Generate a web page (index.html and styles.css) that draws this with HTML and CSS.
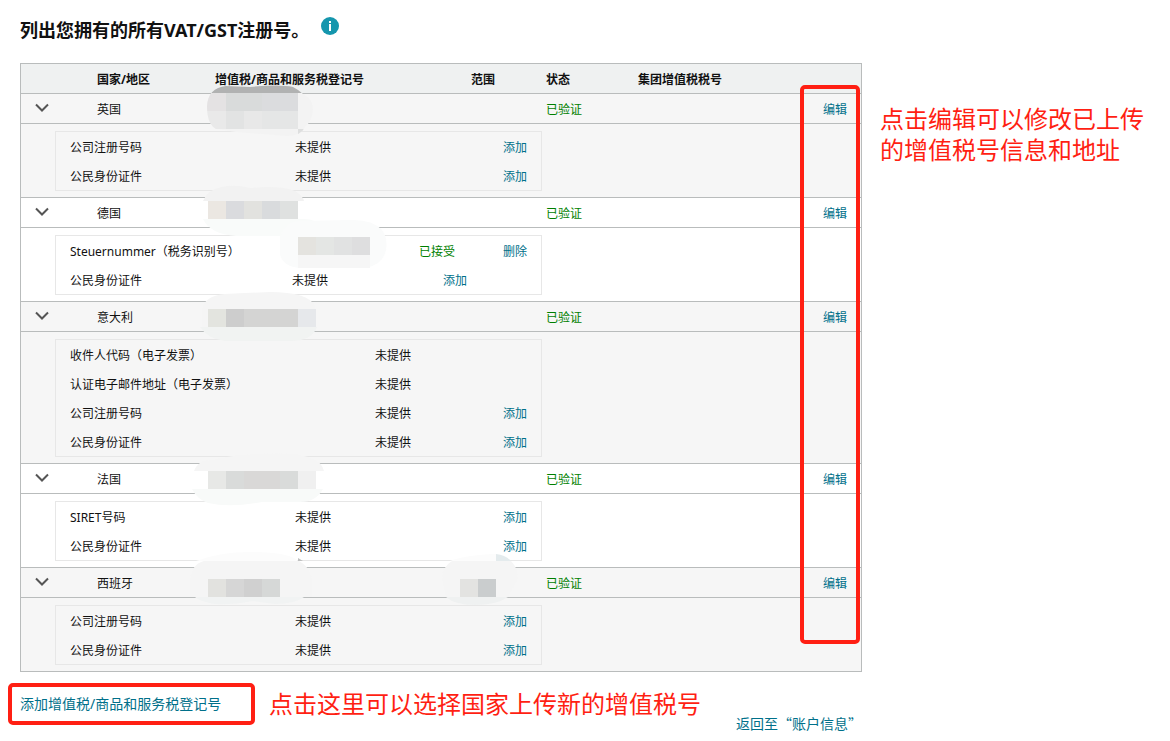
FILE: index.html
```html
<!DOCTYPE html>
<html lang="zh-CN">
<head>
<meta charset="utf-8">
<title>VAT/GST</title>
<link rel="stylesheet" href="styles.css">
</head>
<body>
<header class="head">
  <h1 class="title">列出您拥有的所有VAT/GST注册号。</h1>
  <button class="info" type="button" aria-label="info">
    <svg viewBox="0 0 18 18" width="18" height="18"><circle cx="9" cy="9" r="9" fill="#1596ad"/><path d="M8 4h2v2H8zM8 7h2v7H8z" fill="#fff"/></svg>
  </button>
</header>
<div class="layout">
  <main>
    <div class="table-wrap">
      <table class="vat">
        <colgroup><col class="c-toggle"><col class="c-country"><col class="c-number"><col class="c-scope"><col class="c-status"><col><col class="c-edit"></colgroup>
        <thead>
          <tr><th></th><th>国家/地区</th><th>增值税/商品和服务税登记号</th><th>范围</th><th>状态</th><th>集团增值税税号</th><th></th></tr>
        </thead>
        <tbody class="shade">
          <tr class="main">
            <td><button class="toggle" type="button" aria-label="toggle"><svg viewBox="0 0 14 10" width="14" height="10"><path d="M1 1.500l6 6 6-6"/></svg></button></td>
            <td>英国</td>
            <td class="cover"><svg class="mask" viewBox="185 74 140 70"><clipPath id="m1"><path d="M207 106Q208 88 226 86L250 87Q280 84 293 87Q299 90 303 94Q313 99 313 110Q312 121 305 127Q301 136 287 136L262 134L236 132Q225 130 216 129Q207 124 207 106z"/></clipPath><g clip-path="url(#m1)"><path fill="#f3f3f3" d="M200 80h120v60H200z"/><path fill="#b1b2b2" d="M200 80h110v13H200z"/><path fill="#e4e2e3" d="M200 93h26v18h-26z"/><path fill="#d9dbdb" d="M226 93h36v18h-36z"/><path fill="#dbdcde" d="M262 93h36v18h-36z"/><path fill="#e9e9e9" d="M200 111h26v18h-26z"/><path fill="#e2e3e3" d="M226 111h18v18h-18z"/><path fill="#e8e8e8" d="M244 111h18v18h-18z"/><path fill="#e5e6e6" d="M262 111h36v18h-36z"/><path fill="#dedfdf" d="M298 129h8l-7 5h-1z"/></g></svg></td>
            <td></td><td class="ok">已验证</td><td></td><td class="edit"><a href="#">编辑</a></td>
          </tr>
          <tr class="detail"><td colspan="7">
            <table class="sub">
              <colgroup><col class="s-label"><col><col class="s-act"></colgroup>
              <tr><td>公司注册号码</td><td>未提供</td><td class="act"><a href="#">添加</a></td></tr>
              <tr><td>公民身份证件</td><td>未提供</td><td class="act"><a href="#">添加</a></td></tr>
            </table></td></tr>
        </tbody>
        <tbody>
          <tr class="main">
            <td><button class="toggle" type="button" aria-label="toggle"><svg viewBox="0 0 14 10" width="14" height="10"><path d="M1 1.500l6 6 6-6"/></svg></button></td>
            <td>德国</td>
            <td class="cover"><svg class="mask" viewBox="185 178 140 70"><path fill="#f2f2f2" d="M203 201Q208 189 222 187Q235 184 250 188Q280 185 295 191Q303 196 304 201z"/><path fill="#fff" d="M203 201h101v18H203z"/><path fill="#f9fbfa" d="M203 219h100Q318 219 318 227Q316 236 299 236H236Q210 234 203 219z"/><path fill="#ebe7e2" d="M208 201h18v18h-18z"/><path fill="#dadbde" d="M226 201h18v18h-18z"/><path fill="#e2e2df" d="M244 201h18v18h-18z"/><path fill="#d9dbdd" d="M262 201h18v18h-18z"/><path fill="#dfe1e0" d="M280 201h18v18h-18z"/></svg></td>
            <td></td><td class="ok">已验证</td><td></td><td class="edit"><a href="#">编辑</a></td>
          </tr>
          <tr class="detail"><td colspan="7">
            <table class="sub">
              <colgroup><col class="s-label-de"><col><col class="s-state"><col class="s-act"></colgroup>
              <tr><td>Steuernummer（税务识别号）</td><td class="cover"><svg class="mask" viewBox="248 216 140 70"><path fill="#fafbfb" d="M280 237Q284 222 300 221L350 220Q372 219 382 230Q388 238 386 250Q383 265 365 268H300Q284 267 280 255z"/><path fill="#f6f6f6" d="M298 255h72v13h-72z"/><path fill="#e4e3df" d="M298 237h18v18h-18z"/><path fill="#e4e6e4" d="M316 237h18v18h-18z"/><path fill="#e1e2e2" d="M334 237h18v18h-18z"/><path fill="#dededf" d="M352 237h18v18h-18z"/></svg></td><td class="ok">已接受</td><td class="act"><a href="#">删除</a></td></tr>
              <tr><td>公民身份证件</td><td>未提供</td><td class="act"><a href="#">添加</a></td><td></td></tr>
            </table></td></tr>
        </tbody>
        <tbody class="shade">
          <tr class="main">
            <td><button class="toggle" type="button" aria-label="toggle"><svg viewBox="0 0 14 10" width="14" height="10"><path d="M1 1.500l6 6 6-6"/></svg></button></td>
            <td>意大利</td>
            <td class="cover"><svg class="mask" viewBox="185 282 140 70"><path fill="#f5f5f5" d="M202 309Q205 296 224 294L270 292Q308 292 315 306V328H202z"/><path fill="#f1f3f2" d="M200 327H317Q312 341 290 341H225Q208 339 200 327z"/><path fill="#e3e4df" d="M208 309h18v18h-18z"/><path fill="#cdcdcd" d="M226 309h18v18h-18z"/><path fill="#d4d4d3" d="M244 309h54v18h-54z"/><path fill="#e6e8eb" d="M298 309h18v18h-18z"/></svg></td>
            <td></td><td class="ok">已验证</td><td></td><td class="edit"><a href="#">编辑</a></td>
          </tr>
          <tr class="detail"><td colspan="7">
            <table class="sub">
              <colgroup><col class="s-label-it"><col><col class="s-act"></colgroup>
              <tr><td>收件人代码（电子发票）</td><td>未提供</td><td></td></tr>
              <tr><td>认证电子邮件地址（电子发票）</td><td>未提供</td><td></td></tr>
              <tr><td>公司注册号码</td><td>未提供</td><td class="act"><a href="#">添加</a></td></tr>
              <tr><td>公民身份证件</td><td>未提供</td><td class="act"><a href="#">添加</a></td></tr>
            </table></td></tr>
        </tbody>
        <tbody>
          <tr class="main">
            <td><button class="toggle" type="button" aria-label="toggle"><svg viewBox="0 0 14 10" width="14" height="10"><path d="M1 1.500l6 6 6-6"/></svg></button></td>
            <td>法国</td>
            <td class="cover"><svg class="mask" viewBox="185 444 140 70"><path fill="#f5f5f5" d="M194 471Q198 460 212 460Q240 454 262 454Q300 452 315 460Q322 463 324 471z"/><path fill="#fff" d="M194 471h129v18H194z"/><path fill="#f8faf9" d="M192 489H323Q316 502 300 502L262 502Q230 508 208 503Q197 499 192 489z"/><path fill="#e7e8e6" d="M208 471h18v18h-18z"/><path fill="#d9dbda" d="M226 471h72v18h-72z"/><path fill="#d9d8d7" d="M244 471h36v18h-36z"/><path fill="#f0f0f0" d="M298 471h18v18h-18z"/></svg></td>
            <td></td><td class="ok">已验证</td><td></td><td class="edit"><a href="#">编辑</a></td>
          </tr>
          <tr class="detail"><td colspan="7">
            <table class="sub">
              <colgroup><col class="s-label"><col><col class="s-act"></colgroup>
              <tr><td>SIRET号码</td><td>未提供</td><td class="act"><a href="#">添加</a></td></tr>
              <tr><td>公民身份证件</td><td>未提供</td><td class="act"><a href="#">添加</a></td></tr>
            </table></td></tr>
        </tbody>
        <tbody class="shade">
          <tr class="main">
            <td><button class="toggle" type="button" aria-label="toggle"><svg viewBox="0 0 14 10" width="14" height="10"><path d="M1 1.500l6 6 6-6"/></svg></button></td>
            <td>西班牙</td>
            <td class="cover"><svg class="mask" viewBox="185 548 140 70"><path fill="#fcfcfc" d="M196 561Q220 552 250 552Q290 552 298 561z"/><path fill="#bfc0c0" d="M298 558l5 3h-5z"/><path fill="#f5f5f5" d="M190 579Q192 564 204 561H299Q309 566 312 579V597H190z"/><path fill="#f1f3f3" d="M195 597H304Q295 604 275 604L253 601Q220 607 206 602Q198 600 195 597z"/><path fill="#e2e2df" d="M208 579h18v18h-18z"/><path fill="#d6d6d6" d="M226 579h18v18h-18z"/><path fill="#d0d0d0" d="M244 579h18v18h-18z"/><path fill="#d6d8d7" d="M262 579h18v18h-18z"/></svg></td>
            <td class="cover"><svg class="mask" viewBox="441 548 140 70"><path fill="#fcfcfc" d="M450 561Q465 555 496 554v7z"/><path fill="#e4ebed" d="M496 554q10 1 15 7h-15z"/><path fill="#f5f5f5" d="M442 579Q442 567 452 561H511Q518 568 518 579L508 597H446z"/><path fill="#eff1f1" d="M446 597H508Q496 605 475 605Q455 605 446 597z"/><path fill="#e3e3e1" d="M460 579h18v18h-18z"/><path fill="#cacdce" d="M478 579h18v18h-18z"/></svg></td>
            <td class="ok">已验证</td><td></td><td class="edit"><a href="#">编辑</a></td>
          </tr>
          <tr class="detail"><td colspan="7">
            <table class="sub">
              <colgroup><col class="s-label"><col><col class="s-act"></colgroup>
              <tr><td>公司注册号码</td><td>未提供</td><td class="act"><a href="#">添加</a></td></tr>
              <tr><td>公民身份证件</td><td>未提供</td><td class="act"><a href="#">添加</a></td></tr>
            </table></td></tr>
        </tbody>
      </table>
      <div class="frame"></div>
    </div>
    <div class="foot">
      <div class="boxed"><a href="#">添加增值税/商品和服务税登记号</a></div>
      <p class="note">点击这里可以选择国家上传新的增值税号</p>
      <a class="back" href="#">返回至“账户信息”</a>
    </div>
  </main>
  <aside class="side"><p class="note">点击编辑可以修改已上传的增值税号信息和地址</p></aside>
</div>
</body>
</html>
```

FILE: styles.css
```css
* { box-sizing: border-box; }
body {
  margin: 0;
  background: #fff;
  color: #111;
  font: 12px/18px "Noto Sans", "Noto Sans CJK SC", sans-serif;
}
a { color: #00708a; text-decoration: none; }
button { padding: 0; border: 0; background: none; cursor: pointer; }
svg { display: block; }

.head {
  display: flex;
  align-items: flex-start;
  gap: 12px;
  padding: 17px 20px 0;
  height: 63px;
}
.title { margin: 0; font-size: 18px; line-height: 26px; font-weight: 700; }

.layout {
  display: grid;
  grid-template-columns: minmax(0, 1fr) 280px;
  gap: 18px;
  padding: 0 10px 0 20px;
}
.table-wrap { position: relative; }

table { border-spacing: 0; table-layout: fixed; }
th, td { padding: 0; text-align: left; white-space: nowrap; }
.vat { width: 100%; border: 1px solid #b9bcbc; }
.vat > thead th {
  height: 30px;
  padding-top: 2px;
  background: #eff1f1;
  border-bottom: 1px solid #b9bcbc;
}
.main > td { height: 30px; padding-top: 2px; border-bottom: 1px solid #b9bcbc; }
.detail > td { padding: 7px 0 6px 34px; border-bottom: 1px solid #b9bcbc; }
.vat > tbody:last-child .detail > td { border-bottom: 0; }
.shade { background: #f6f6f6; }

.c-toggle { width: 76px; }
.c-country { width: 118px; }
.c-number { width: 256px; }
.c-scope { width: 75px; }
.c-status { width: 92px; }
.c-edit { width: 62px; }

.toggle { display: block; margin: 0 0 4px 14px; }
.toggle path { fill: none; stroke: #555; stroke-width: 2; }
.ok { color: #007f00; }
.main > .edit { padding-right: 14px; text-align: right; }

.sub { width: 487px; border: 1px solid #e7e7e7; }
.sub td { height: 29px; padding-left: 14px; padding-top: 2px; }
.sub .act { padding-right: 14px; text-align: right; }
.s-label { width: 225px; }
.s-label-de { width: 222px; }
.s-label-it { width: 305px; }
.s-state { width: 76px; }
.s-act { width: 60px; }

.cover { position: relative; }
.mask {
  position: absolute;
  left: -30px;
  top: -20px;
  width: 140px;
  height: 70px;
  z-index: 1;
}

.frame {
  position: absolute;
  top: 22px;
  right: 2px;
  bottom: 28px;
  width: 60px;
  border: 4px solid #ff1f13;
  border-radius: 5px;
  z-index: 2;
}
.foot {
  display: flex;
  align-items: flex-start;
  gap: 14px;
  margin: 11px 0 0 -12px;
  font-size: 14px;
}
.boxed {
  flex: none;
  width: 247px;
  padding: 8px;
  border: 4px solid #ff1f13;
  border-radius: 5px;
  line-height: 18px;
}
.note { margin: 0; color: #ff1f13; font-size: 24px; line-height: 31px; }
.foot .note { margin-top: 5px; white-space: nowrap; }
.back {
  margin: 31px 0 0 auto;
  font-family: "Noto Sans CJK SC", sans-serif;
  white-space: nowrap;
}
.side { padding-top: 40px; }
```
